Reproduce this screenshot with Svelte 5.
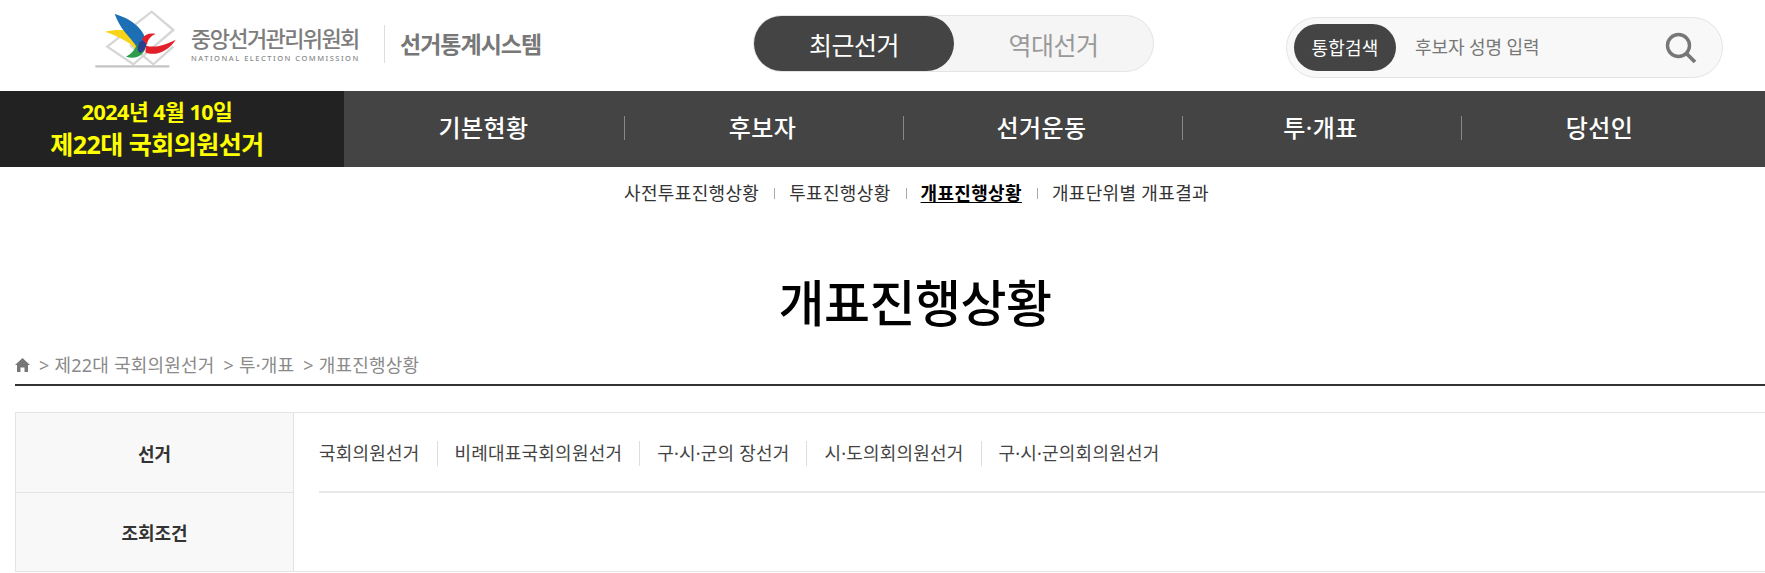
<script>
  const menus = ["기본현황", "후보자", "선거운동", "투·개표", "당선인"];
  const subs = ["사전투표진행상황", "투표진행상황", "개표진행상황", "개표단위별 개표결과"];
  const elections = ["국회의원선거", "비례대표국회의원선거", "구·시·군의 장선거", "시·도의회의원선거", "구·시·군의회의원선거"];
  const crumbs = ["제22대 국회의원선거", "투·개표", "개표진행상황"];
</script>

<div class="page">
  <header>
    <div class="logo">
      <svg width="110" height="70" viewBox="0 0 330 210" aria-hidden="true">
        <path d="M52 125 L185 20 L250 75 L130 178 Z" fill="none" stroke="#d6d6d6" stroke-width="7" />
        <path d="M120 120 L190 178 L250 125" fill="none" stroke="#d6d6d6" stroke-width="7" />
        <path d="M16 184 H238" stroke="#c4c4c4" stroke-width="7" />
        <path d="M45 80 C85 72 125 72 150 98 L138 132 C115 108 80 92 45 80 Z" fill="#f7d417" />
        <path d="M74 27 C115 38 160 65 170 112 L150 142 C135 115 120 100 105 82 C92 66 82 48 74 27 Z" fill="#1d6fb5" />
        <path d="M108 155 C125 146 136 132 142 116 L168 118 C168 148 140 166 108 155 Z" fill="#2c9e4b" />
        <path d="M146 116 C152 104 162 104 169 112 C171 126 162 140 150 144 C141 136 141 126 146 116 Z" fill="#2b3f8f" />
        <path d="M156 102 C165 88 180 83 197 87 C182 93 172 104 171 120 Z" fill="#e2202c" />
        <path d="M257 104 C238 136 195 156 166 142 L168 122 C195 130 225 120 257 104 Z" fill="#e2202c" />
      </svg>
      <div class="org">
        <strong>중앙선거관리위원회</strong>
        <span>NATIONAL ELECTION COMMISSION</span>
      </div>
      <div class="system">선거통계시스템</div>
    </div>

    <div class="toggle">
      <button class="on">최근선거</button>
      <button>역대선거</button>
    </div>

    <div class="search">
      <button>통합검색</button>
      <span class="hint">후보자 성명 입력</span>
      <svg width="32" height="32" viewBox="0 0 32 32" aria-hidden="true">
        <circle cx="13.5" cy="13.5" r="11" fill="none" stroke="#777" stroke-width="3.4" />
        <path d="M21.5 21.5 L30 30" stroke="#777" stroke-width="3.8" />
      </svg>
    </div>
  </header>

  <nav class="gnb">
    <div class="current">
      <p>2024년 4월 10일</p>
      <p class="big">제22대 국회의원선거</p>
    </div>
    {#each menus as menu}
      <a href="#top">{menu}</a>
    {/each}
  </nav>

  <ul class="subnav">
    {#each subs as sub, i}
      <li class:active={i === 2}>{sub}</li>
    {/each}
  </ul>

  <h1>개표진행상황</h1>

  <main>
    <div class="crumbs">
      <svg width="15" height="14" viewBox="0 0 15 14" aria-hidden="true">
        <path d="M7.5 0 L15 7 H13 V14 H9.5 V9.5 H5.5 V14 H2 V7 H0 Z" fill="#777" />
      </svg>
      {#each crumbs as crumb}
        <span class="gt">&gt;</span><span class="crumb">{crumb}</span>
      {/each}
    </div>

    <div class="filter">
      <div class="label">선거</div>
      <div class="value">
        <ul class="tabs">
          {#each elections as item}
            <li>{item}</li>
          {/each}
        </ul>
      </div>
      <div class="label last">조회조건</div>
      <div class="value last"></div>
    </div>
  </main>
</div>

<style>
  :global(html), :global(body) {
    overflow: hidden;
  }

  :global(body) {
    font-family: "Noto Sans", "Noto Sans CJK KR", sans-serif;
    background: #fff;
  }

  .page {
    width: 1830px;
    color: #333;
  }

  header {
    height: 91px;
    display: flex;
    align-items: flex-start;
  }

  .logo {
    width: 753px;
    display: flex;
    align-items: flex-start;
    padding-left: 90px;
    box-sizing: border-box;
  }

  .logo svg {
    margin-top: 5px;
    flex: none;
  }

  .org {
    margin: 25px 0 0 -9px;
    width: 193px;
    height: 38px;
    border-right: 1px solid #ddd;
    display: flex;
    flex-direction: column;
  }

  .org strong {
    font-size: 22px;
    font-weight: 500;
    line-height: 27px;
    letter-spacing: -1.6px;
    color: #7d7d7d;
  }

  .org span {
    font-size: 7.5px;
    line-height: 12px;
    letter-spacing: 1.5px;
    color: #8b8b8b;
    font-weight: 500;
  }

  .system {
    margin: 29px 0 0 15px;
    font-size: 23px;
    line-height: 30px;
    font-weight: 700;
    letter-spacing: -1px;
    color: #777;
  }

  .toggle {
    margin-top: 15px;
    width: 401px;
    height: 57px;
    box-sizing: border-box;
    border: 1px solid #e4e4e4;
    border-radius: 29px;
    background: #f5f5f5;
    display: flex;
  }

  button {
    font: inherit;
    border: 0;
    padding: 0;
    background: none;
  }

  .toggle button {
    flex: 1;
    border-radius: 28px;
    font-size: 25px;
    letter-spacing: -0.5px;
    color: #999;
  }

  .toggle .on {
    flex: none;
    width: 200px;
    background: #444;
    color: #fff;
  }

  .search {
    margin: 17px 0 0 132px;
    width: 437px;
    height: 61px;
    box-sizing: border-box;
    border: 1px solid #e4e4e4;
    border-radius: 31px;
    background: #f8f8f8;
    display: flex;
    align-items: center;
    padding-left: 7px;
  }

  .search button {
    width: 102px;
    height: 47px;
    padding-bottom: 2px;
    border-radius: 24px;
    background: #444;
    color: #fff;
    font-size: 18px;
    letter-spacing: 0.2px;
  }

  .hint {
    margin: 0 0 4px 19px;
    font-size: 18px;
    letter-spacing: -0.1px;
    color: #777;
    flex: 1;
  }

  .search svg {
    margin-right: 25px;
  }

  .gnb {
    height: 76px;
    background: #444;
    display: flex;
    align-items: center;
  }

  .current {
    width: 344px;
    height: 100%;
    padding: 1px 30px 0 0;
    box-sizing: border-box;
    background: #222;
    color: #ff0;
    font-weight: 700;
    text-align: center;
    display: flex;
    flex-direction: column;
    justify-content: center;
  }

  .current p {
    margin: 0;
    font-size: 21.5px;
    line-height: 30px;
    letter-spacing: -0.5px;
  }

  .current .big {
    font-size: 25px;
    line-height: 35px;
  }

  .gnb a {
    width: 279px;
    padding-bottom: 2px;
    position: relative;
    line-height: 26px;
    text-align: center;
    color: #fff;
    font-size: 24px;
    letter-spacing: 0.4px;
    font-weight: 500;
    text-decoration: none;
  }

  .gnb a:not(:last-child)::after {
    content: "";
    position: absolute;
    right: -2px;
    top: 1px;
    height: 24px;
    width: 1px;
    background: #888;
  }

  .subnav {
    margin: 0;
    padding: 0 0 0 3px;
    list-style: none;
    height: 52px;
    display: flex;
    justify-content: center;
    align-items: center;
    font-size: 18px;
    letter-spacing: 0.33px;
  }

  .subnav li {
    line-height: 24px;
    position: relative;
    padding: 0 15px;
  }

  .subnav li + li::before {
    content: "";
    position: absolute;
    left: 0;
    top: 7px;
    height: 11px;
    width: 1px;
    background: #aaa;
  }

  .subnav .active {
    font-weight: 700;
    color: #000;
    text-decoration: underline;
    text-underline-offset: 2px;
  }

  h1 {
    margin: 49px 0 0;
    font-size: 50px;
    line-height: 70px;
    letter-spacing: -0.5px;
    font-weight: 500;
    color: #000;
    text-align: center;
  }

  main {
    padding-left: 15px;
  }

  .crumbs {
    margin-top: 14px;
    height: 32px;
    border-bottom: 2px solid #333;
    display: flex;
    align-items: flex-start;
    font-size: 18px;
    line-height: 26px;
    letter-spacing: 0.2px;
    color: #8a8a8a;
  }

  .crumbs svg {
    margin: 6px 0 0 0;
  }

  .gt {
    margin: 0 5px 0 9px;
  }

  .filter {
    margin-top: 26px;
    border: 1px solid #e4e4e4;
    display: grid;
    grid-template-columns: 278px 1fr;
    grid-template-rows: 80px 78px;
  }

  .label {
    background: #f8f8f8;
    border-right: 1px solid #e4e4e4;
    border-bottom: 1px solid #e4e4e4;
    display: flex;
    align-items: center;
    justify-content: center;
    font-size: 18px;
    font-weight: 700;
    color: #333;
  }

  .label.last {
    border-bottom: 0;
  }

  .value {
    padding-left: 25px;
  }

  .tabs {
    margin: 0;
    padding: 3px 0 0;
    list-style: none;
    height: 80px;
    box-sizing: border-box;
    border-bottom: 2px solid #e8e8e8;
    display: flex;
    align-items: center;
    font-size: 18px;
    letter-spacing: 0.2px;
    color: #444;
  }

  .tabs li {
    padding: 0 17px;
    line-height: 25px;
    border-right: 1px solid #ddd;
  }

  .tabs li:first-child {
    padding-left: 0;
  }

  .tabs li:last-child {
    border-right: 0;
  }
</style>
